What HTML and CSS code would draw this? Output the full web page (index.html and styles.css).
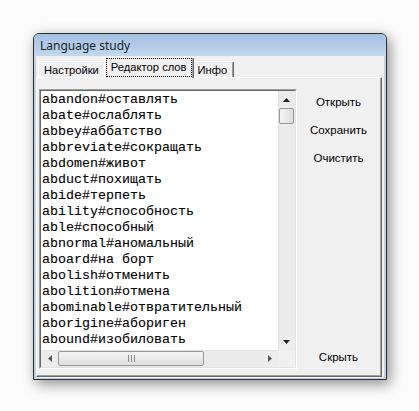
FILE: index.html
```html
<!DOCTYPE html>
<html lang="ru">
<head>
<meta charset="utf-8">
<title>Language study</title>
<link rel="stylesheet" href="styles.css">
</head>
<body>
<div class="window">
  <div class="titlebar">Language study</div>
  <div class="client">
    <div class="tabs">
      <div class="tab">Настройки</div>
      <div class="tab active"><span class="focus">Редактор слов</span></div>
      <div class="tab">Инфо</div>
    </div>
    <div class="panel">
      <div class="memo">
        <div class="memo-inner">
          <div class="memo-main">
            <div class="lines">
              <div>abandon#оставлять</div>
              <div>abate#ослаблять</div>
              <div>abbey#аббатство</div>
              <div>abbreviate#сокращать</div>
              <div>abdomen#живот</div>
              <div>abduct#похищать</div>
              <div>abide#терпеть</div>
              <div>ability#способность</div>
              <div>able#способный</div>
              <div>abnormal#аномальный</div>
              <div>aboard#на борт</div>
              <div>abolish#отменить</div>
              <div>abolition#отмена</div>
              <div>abominable#отвратительный</div>
              <div>aborigine#абориген</div>
              <div>abound#изобиловать</div>
            </div>
            <div class="vscroll">
              <div class="sb-btn"><svg width="7" height="4" viewBox="0 0 7 4"><polygon points="3.5,0 7,4 0,4" fill="#222"/></svg></div>
              <div class="vthumb"></div>
              <div class="track"></div>
              <div class="sb-btn"><svg width="7" height="4" viewBox="0 0 7 4"><polygon points="0,0 7,0 3.5,4" fill="#222"/></svg></div>
            </div>
          </div>
          <div class="hrow">
            <div class="hscroll">
              <div class="sb-btn"><svg width="4" height="7" viewBox="0 0 4 7"><polygon points="0,3.5 4,0 4,7" fill="#555"/></svg></div>
              <div class="hthumb"><svg width="7" height="7" viewBox="0 0 7 7"><path d="M0.5 0v7M3.5 0v7M6.5 0v7" stroke="#8a8a8a" stroke-width="1"/></svg></div>
              <div class="track"></div>
              <div class="sb-btn"><svg width="4" height="7" viewBox="0 0 4 7"><polygon points="0,0 4,3.5 0,7" fill="#555"/></svg></div>
            </div>
            <div class="corner"></div>
          </div>
        </div>
      </div>
      <div class="actions">
        <button class="btn">Открыть</button>
        <button class="btn">Сохранить</button>
        <button class="btn">Очистить</button>
        <button class="btn btn-bottom">Скрыть</button>
      </div>
    </div>
  </div>
</div>
</body>
</html>
```

FILE: styles.css
```css
html, body {
  margin: 0;
}

body {
  width: 419px;
  height: 411px;
  box-sizing: border-box;
  padding: 33px 0 0 33px;
  background: #fcfcfc;
  font-family: "Liberation Sans", Arial, sans-serif;
  overflow: hidden;
}

.window {
  width: 354px;
  height: 347px;
  box-sizing: border-box;
  border: 1px solid #2f2f2f;
  border-radius: 6px 6px 0 0;
  background: #bcd3ec;
  padding: 0 2px 3px 2px;
  display: flex;
  flex-direction: column;
  box-shadow: 3px 4px 14px rgba(0, 0, 0, 0.45);
}

.titlebar {
  flex: none;
  height: 22px;
  margin: 0 -2px;
  padding-left: 6px;
  border-radius: 5px 5px 0 0;
  background: linear-gradient(#a3bfe1, #c3d8ef);
  font-family: "Noto Sans", "Open Sans", sans-serif;
  font-size: 12px;
  line-height: 23px;
  color: #1c1c1c;
}

.client {
  flex: 1;
  display: flex;
  flex-direction: column;
  background: #f0f0f0;
  padding: 1px 1px 1px 0;
}

.tabs {
  flex: none;
  height: 20px;
  display: flex;
  align-items: flex-end;
  padding-left: 2px;
}

.tab {
  position: relative;
  height: 16px;
  box-sizing: border-box;
  padding: 0 6px 0 5px;
  border-top: 1px solid #fff;
  border-left: 1px solid #fff;
  border-right: 1px solid #696969;
  border-radius: 2px 2px 0 0;
  box-shadow: inset -1px 0 #a0a0a0;
  background: #f0f0f0;
  font-size: 11.2px;
  line-height: 16px;
  color: #000;
  white-space: nowrap;
}

.tab.active {
  z-index: 2;
  height: 21px;
  margin: 0 -2px -1px -2px;
  padding: 0 1px;
}

.focus {
  display: block;
  height: 19px;
  box-sizing: border-box;
  border: 1px dotted #000;
  padding: 0 4px;
  line-height: 17px;
}

.panel {
  position: relative;
  z-index: 1;
  flex: 1;
  display: flex;
  align-items: stretch;
  margin-right: 1px;
  padding: 11px 1px 7px 2px;
  border-top: 1px solid #fff;
  border-left: 1px solid #fff;
  border-right: 1px solid #696969;
  border-bottom: 1px solid #696969;
  box-shadow: inset -1px -1px #a0a0a0;
}

.memo {
  flex: none;
  width: 258px;
  height: 280px;
  box-sizing: border-box;
  border: 1px solid;
  border-color: #a0a0a0 #fff #fff #a0a0a0;
}

.memo-inner {
  height: 100%;
  box-sizing: border-box;
  border: 1px solid;
  border-color: #696969 #e3e3e3 #e3e3e3 #696969;
  background: #fff;
  display: flex;
  flex-direction: column;
}

.memo-main {
  flex: 1;
  min-height: 0;
  display: flex;
}

.lines {
  flex: 1;
  overflow: hidden;
  padding: 1px 0 0 1px;
  font-family: "Liberation Mono", "Courier New", monospace;
  font-size: 13.33px;
  line-height: 16px;
  color: #000;
  white-space: nowrap;
  -webkit-text-stroke: 0.1px #000;
}

.vscroll {
  flex: none;
  width: 17px;
  display: flex;
  flex-direction: column;
  background: #ececec;
  box-shadow: inset 1px 0 #e2e2e2;
}

.sb-btn {
  flex: none;
  width: 17px;
  height: 17px;
  display: flex;
  align-items: center;
  justify-content: center;
}

.track {
  flex: 1;
}

.vthumb {
  flex: none;
  height: 16px;
  margin: 0 1px;
  box-sizing: border-box;
  border: 1px solid #979797;
  border-radius: 2px;
  background: linear-gradient(90deg, #f4f4f4, #dedede);
}

.hrow {
  flex: none;
  height: 17px;
  display: flex;
}

.hscroll {
  flex: 1;
  display: flex;
  background: #ececec;
  box-shadow: inset 0 1px #e2e2e2;
}

.hthumb {
  flex: none;
  width: 146px;
  margin: 1px 0;
  box-sizing: border-box;
  border: 1px solid #979797;
  border-radius: 2px;
  background: linear-gradient(#f4f4f4, #dedede);
  display: flex;
  align-items: center;
  justify-content: center;
}

.corner {
  flex: none;
  width: 17px;
  background: #f0f0f0;
}

.actions {
  flex: 1;
  display: flex;
  flex-direction: column;
  align-items: center;
  gap: 3px;
  height: 280px;
}

.btn {
  width: 75px;
  height: 25px;
  padding: 0;
  border: none;
  background: transparent;
  font-family: "Liberation Sans", Arial, sans-serif;
  font-size: 11.5px;
  color: #000;
}

.btn-bottom {
  margin-top: auto;
}
```
